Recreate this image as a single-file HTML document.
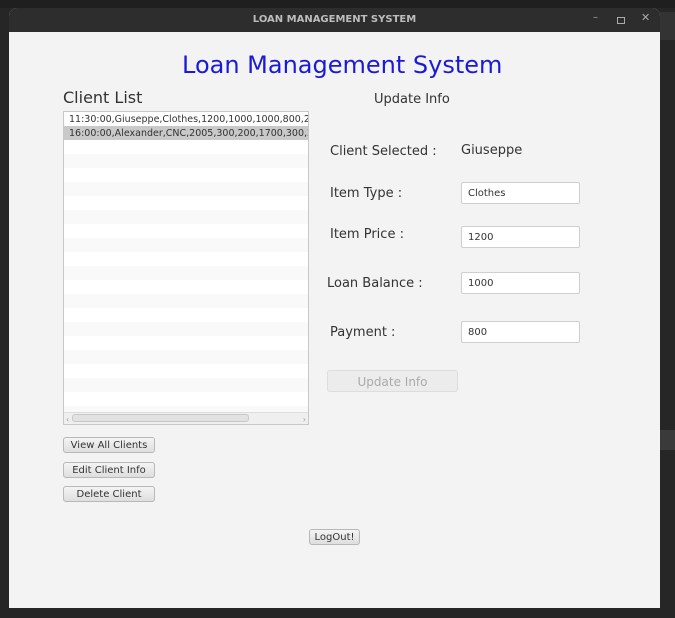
<!DOCTYPE html>
<html><head><style>
body{margin:0;width:675px;height:618px;background:#262626;position:relative;overflow:hidden;font-family:"DejaVu Sans","Liberation Sans",sans-serif;}
.a{position:absolute;white-space:nowrap;}
.win{position:absolute;left:9px;top:8px;width:651px;height:600px;background:#f3f3f3;border-radius:8px 8px 0 0;overflow:hidden;}
.tb{position:absolute;left:0;top:0;width:652px;height:24px;background:#2d2d2d;}
.btn{position:absolute;background:linear-gradient(#f4f4f4,#dedede);border:1px solid #b8b8b8;border-radius:3px;font-size:10px;color:#333;text-align:center;box-sizing:border-box;}
.fld{position:absolute;left:461px;width:119px;height:22px;background:#fff;border:1px solid #cfcfcf;border-radius:2px;box-sizing:border-box;font-size:10px;color:#333;padding:5px 0 0 6px;}
.lbl{position:absolute;font-size:13px;color:#333;}
</style></head><body>
<div class="a" style="left:0;top:0;width:675px;height:8px;background:#1f1f1f"></div>
<div class="a" style="left:660px;top:12px;width:15px;height:28px;background:#333"></div>
<div class="a" style="left:660px;top:430px;width:15px;height:20px;background:#3a3a3a"></div>
<div class="win">
<div class="tb"></div>
<div class="a" style="left:0;width:651px;top:6px;text-align:center;font-size:10px;font-weight:bold;color:#bdbdbd;">LOAN MANAGEMENT SYSTEM</div>
<div class="a" style="left:584px;top:4px;font-size:10px;color:#aaa">–</div>
<div class="a" style="left:608px;top:9px;width:6px;height:5px;border:1px solid #aaa"></div>
<div class="a" style="left:632px;top:3px;font-size:11px;color:#aaa">✕</div>
</div>
<div class="a" style="left:182px;top:51px;font-size:24px;color:#1a1ad6;">Loan Management System</div>
<div class="a" style="left:63px;top:88px;font-size:16px;color:#333;">Client List</div>
<div class="a" style="left:374px;top:92px;font-size:13px;color:#333;">Update Info</div>
<div class="a" style="left:63px;top:111px;width:246px;height:314px;border:1px solid #c8c8c8;box-sizing:border-box;overflow:hidden;background:repeating-linear-gradient(#fff 0 14px,#f9f9f9 14px 28px);">
<div style="height:14px;background:#fff;font-size:9.5px;color:#333;padding:2px 0 0 5px;box-sizing:border-box;white-space:nowrap">11:30:00,Giuseppe,Clothes,1200,1000,1000,800,200</div>
<div style="height:14px;background:#c9c9c9;font-size:9.5px;color:#333;padding:2px 0 0 5px;box-sizing:border-box;white-space:nowrap">16:00:00,Alexander,CNC,2005,300,200,1700,300,200</div>
<div style="position:absolute;left:0;bottom:0;width:246px;height:11px;background:#efefef;border-top:1px solid #ddd;"></div>
<div style="position:absolute;left:8px;bottom:2px;width:175px;height:6px;background:#e2e2e2;border:1px solid #c8c8c8;border-radius:3px;"></div>
<div style="position:absolute;left:2px;bottom:0;font-size:8px;color:#999">‹</div>
<div style="position:absolute;right:2px;bottom:0;font-size:8px;color:#999">›</div>
</div>
<div class="btn" style="left:63px;top:437px;width:92px;height:16px;padding-top:2px">View All Clients</div>
<div class="btn" style="left:63px;top:462px;width:92px;height:16px;padding-top:2px">Edit Client Info</div>
<div class="btn" style="left:63px;top:486px;width:92px;height:16px;padding-top:2px">Delete Client</div>
<div class="btn" style="left:309px;top:529px;width:51px;height:16px;padding-top:2px">LogOut!</div>
<div class="lbl" style="left:330px;top:144px">Client Selected :</div>
<div class="lbl" style="left:461px;top:143px">Giuseppe</div>
<div class="lbl" style="left:330px;top:186px">Item Type :</div>
<div class="lbl" style="left:330px;top:227px">Item Price :</div>
<div class="lbl" style="left:327px;top:276px">Loan Balance :</div>
<div class="lbl" style="left:330px;top:325px">Payment :</div>
<div class="fld" style="top:182px">Clothes</div>
<div class="fld" style="top:226px">1200</div>
<div class="fld" style="top:272px">1000</div>
<div class="fld" style="top:321px">800</div>
<div class="btn" style="left:327px;top:370px;width:131px;height:22px;padding-top:4px;font-size:12px;color:#aaa;border-color:#ddd;background:#ececec">Update Info</div>
</body></html>
